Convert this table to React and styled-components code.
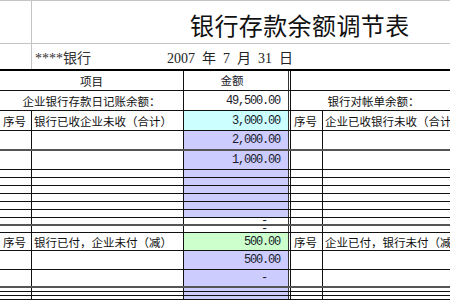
import React from "react";
import styled, { createGlobalStyle } from "styled-components";

const GlobalStyle = createGlobalStyle`
  html, body {
    margin: 0;
    padding: 0;
    background: #fff;
  }
  body {
    font-family: "Noto Sans CJK SC", "Liberation Sans", sans-serif;
    color: #111;
    overflow: hidden;
  }
`;

const TONES = {
  white: "#ffffff",
  cyan: "#ccffff",
  violet: "#ccccff",
  green: "#ccffcc",
};

const Page = styled.div`
  width: 450px;
  height: 300px;
  overflow: hidden;
  border-top: 1px solid #c4c4c4;
  box-sizing: border-box;
`;

// sheet head: title + bank / date line
const HeadRow = styled.div`
  display: flex;
  height: ${(p) => p.$h}px;
  box-sizing: border-box;
  border-bottom: ${(p) => (p.$strong ? "2px solid #000" : "1px solid #c4c4c4")};
`;

const Gutter = styled.div`
  width: 32px;
  flex: none;
  box-sizing: border-box;
  border-right: 1px solid #c4c4c4;
`;

const Title = styled.h1`
  margin: 0 0 0 158px;
  padding-top: 6px;
  font-size: 24px;
  font-weight: 400;
  letter-spacing: 0.4px;
  white-space: nowrap;
  color: #111;
`;

const Subline = styled.div`
  display: flex;
  align-items: center;
  padding-left: 3px;
  font-family: "Liberation Serif", "Noto Sans CJK SC", serif;
  font-size: 14px;
  color: #222;
  white-space: nowrap;
`;

const BankName = styled.span`
  width: 132px;
  flex: none;
  color: #333;
`;

const DateText = styled.span`
  word-spacing: 3.5px;
`;

// table
const Row = styled.div`
  display: flex;
  height: ${(p) => p.$h}px;
  box-sizing: border-box;
  border-bottom: ${(p) => (p.$heavy ? "2px solid #555" : "1px solid #111")};
  font-size: 11.5px;
  white-space: nowrap;
  overflow: hidden;
`;

const Cell = styled.div`
  display: flex;
  align-items: center;
  flex: none;
  box-sizing: border-box;
  overflow: hidden;
`;

const NoCell = styled(Cell)`
  width: 32px;
  padding-left: 3px;
  border-right: 1px solid #111;
`;

const ItemCell = styled(Cell)`
  width: 152px;
  padding-left: 2px;
  border-right: 1px solid #111;
`;

const SpanCell = styled(Cell)`
  width: 184px;
  justify-content: center;
  border-right: 1px solid #111;
`;

const AmtCell = styled(Cell)`
  width: 104px;
  justify-content: ${(p) => (p.$center ? "center" : "flex-end")};
  padding-right: ${(p) => (p.$dash ? 21 : 8)}px;
  background: ${(p) => TONES[p.$tone || "white"]};
  font-family: ${(p) =>
    p.$center ? '"Noto Sans CJK SC", sans-serif' : '"Liberation Mono", monospace'};
  font-size: ${(p) => (p.$center ? "11.5px" : "12px")};
  letter-spacing: ${(p) => (p.$center ? "0" : "-1.2px")};
  line-height: 1;
  color: #1a1a2a;
`;

const DoubleRule = styled.div`
  width: 3px;
  flex: none;
  box-sizing: border-box;
  border-left: 1px solid #333;
  border-right: 1px solid #111;
`;

const RSpanCell = styled(Cell)`
  flex: 1;
  justify-content: center;
  padding-left: 6px;
`;

const RItemCell = styled(Cell)`
  flex: 1;
  padding-left: 2px;
`;

const Table = styled.div`
  display: flex;
  flex-direction: column;
`;

const rows = [
  { h: 20, kind: "head" },
  { h: 20, kind: "balance", left: "企业银行存款日记账余额：", amt: "49,500.00", right: "银行对帐单余额：" },
  { h: 20, kind: "section", left: "银行已收企业未收（合计）", amt: "3,000.00", tone: "cyan", right: "企业已收银行未收（合计）" },
  { h: 20, amt: "2,000.00", tone: "violet", heavy: true },
  { h: 19, amt: "1,000.00", tone: "violet" },
  { h: 8, tone: "violet" },
  { h: 8, tone: "violet" },
  { h: 8, tone: "violet" },
  { h: 8, tone: "violet" },
  { h: 8, tone: "violet" },
  { h: 8, tone: "violet" },
  { h: 8, amt: "-", dash: true, heavy: true },
  { h: 7, amt: "-", dash: true },
  { h: 18, kind: "section", left: "银行已付，企业未付（减）", amt: "500.00", tone: "green", right: "企业已付，银行未付（减）" },
  { h: 19, amt: "500.00", tone: "violet" },
  { h: 18, amt: "-", tone: "violet", dash: true, heavy: true },
  { h: 4, tone: "violet" },
  { h: 4, tone: "violet" },
  { h: 4, tone: "violet" },
  { h: 12, tone: "violet" },
];

function SheetRow({ r }) {
  if (r.kind === "head") {
    return (
      <Row $h={r.h}>
        <SpanCell>项目</SpanCell>
        <AmtCell $center>金额</AmtCell>
        <DoubleRule />
        <RSpanCell />
      </Row>
    );
  }
  if (r.kind === "balance") {
    return (
      <Row $h={r.h}>
        <SpanCell>{r.left}</SpanCell>
        <AmtCell>{r.amt}</AmtCell>
        <DoubleRule />
        <RSpanCell>{r.right}</RSpanCell>
      </Row>
    );
  }
  const section = r.kind === "section";
  return (
    <Row $h={r.h} $heavy={r.heavy}>
      <NoCell>{section ? "序号" : ""}</NoCell>
      <ItemCell>{section ? r.left : ""}</ItemCell>
      <AmtCell $tone={r.tone} $dash={r.dash}>
        {r.amt || ""}
      </AmtCell>
      <DoubleRule />
      <NoCell>{section ? "序号" : ""}</NoCell>
      <RItemCell>{section ? r.right : ""}</RItemCell>
    </Row>
  );
}

export default function App() {
  return (
    <>
      <GlobalStyle />
      <Page>
        <HeadRow $h={43}>
          <Gutter />
          <Title>银行存款余额调节表</Title>
        </HeadRow>
        <HeadRow $h={27} $strong>
          <Gutter />
          <Subline>
            <BankName>****银行</BankName>
            <DateText>2007 年 7 月 31 日</DateText>
          </Subline>
        </HeadRow>
        <Table>
          {rows.map((r, i) => (
            <SheetRow key={i} r={r} />
          ))}
        </Table>
      </Page>
    </>
  );
}
